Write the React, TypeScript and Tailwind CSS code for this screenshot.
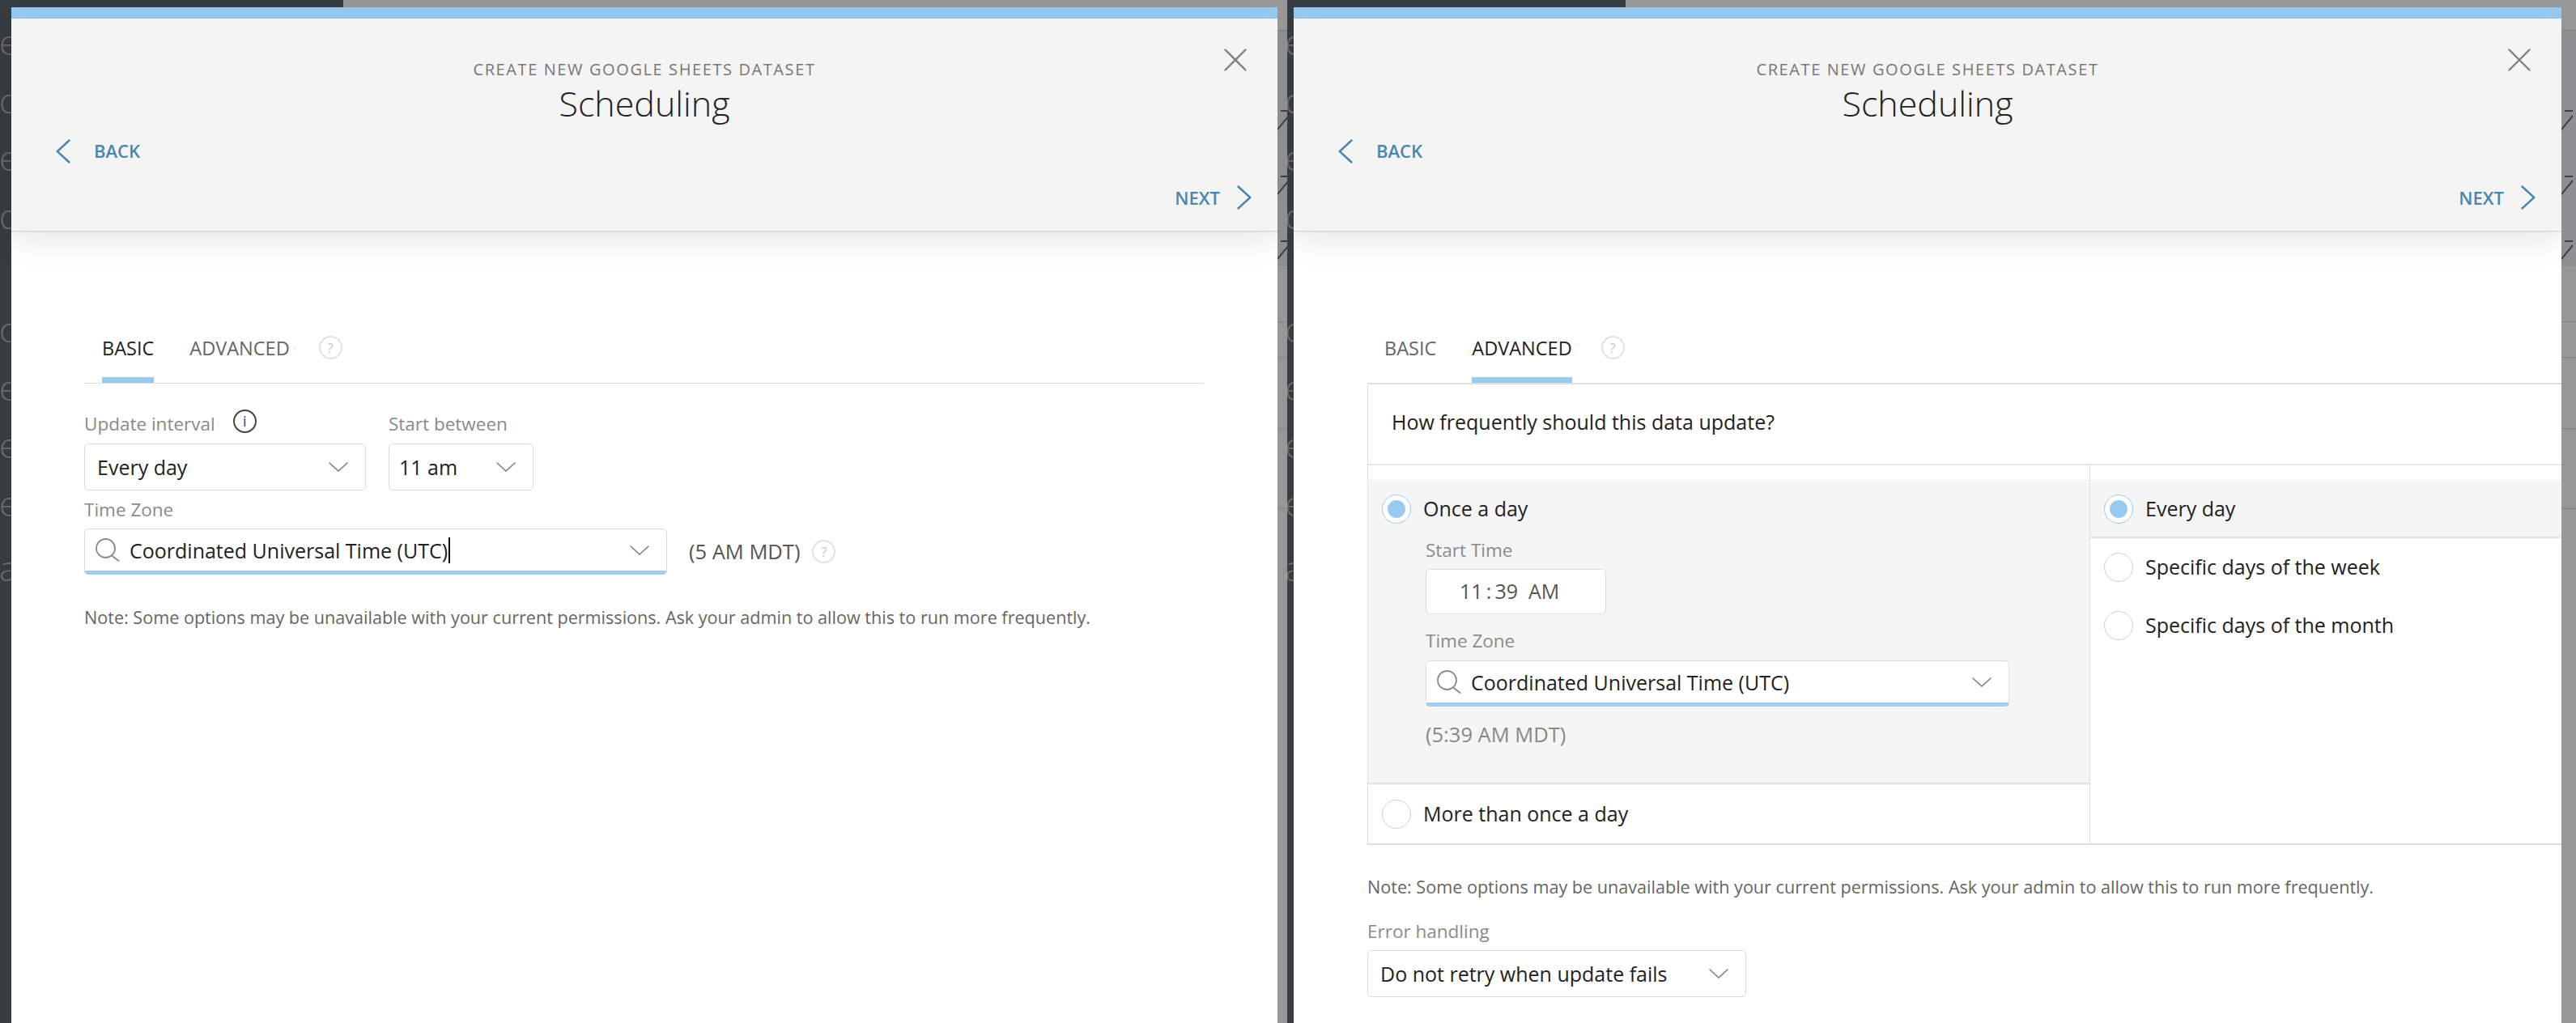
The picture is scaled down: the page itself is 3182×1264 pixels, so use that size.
import React from "react";

const Chevron = ({ dir, className }: { dir: "left" | "right"; className?: string }) => (
  <svg viewBox="0 0 18 30" className={className} fill="none" stroke="#4a86b0" strokeWidth="2.4" strokeLinecap="round" strokeLinejoin="round">
    {dir === "left" ? <path d="M16.5 1.5 L1.8 15 L16.5 28.5" /> : <path d="M1.5 1.5 L16.2 15 L1.5 28.5" />}
  </svg>
);

const Caret = () => (
  <svg viewBox="0 0 24 12" className="w-[24px] h-[12px] shrink-0" fill="none" stroke="#7c7c7c" strokeWidth="1.5" strokeLinecap="round">
    <path d="M1 1 L12 11 L23 1" />
  </svg>
);

const Search = () => (
  <svg viewBox="0 0 31 29" className="w-[31px] h-[29px] shrink-0" fill="none" stroke="#8a8a8a" strokeWidth="1.8" strokeLinecap="round">
    <circle cx="13.5" cy="12.5" r="11.5" />
    <path d="M21 21.5 L29.5 28" />
  </svg>
);

const CloseIcon = () => (
  <svg viewBox="0 0 28 28" className="w-[28px] h-[28px]" fill="none" stroke="#808080" strokeWidth="2.4" strokeLinecap="round">
    <path d="M1.5 1.5 L26.5 26.5 M26.5 1.5 L1.5 26.5" />
  </svg>
);

const Help = ({ className }: { className?: string }) => (
  <span className={`flex items-center justify-center w-[29px] h-[29px] rounded-full border-2 border-[#e2e2e2] text-[17px] leading-none text-[#c8c8c8] ${className ?? ""}`}>?</span>
);

const Info = () => (
  <span className="flex items-center justify-center w-[29px] h-[29px] rounded-full border-2 border-[#444] text-[18px] leading-none text-[#444]">i</span>
);

const Radio = ({ on }: { on?: boolean }) => (
  <span className={`flex items-center justify-center w-[36px] h-[36px] rounded-full border bg-white shrink-0 ${on ? "border-[#98caf0]" : "border-[#cfcfcf]"}`}>
    {on && <span className="w-[22px] h-[22px] rounded-full bg-[#98caf0]" />}
  </span>
);

const Select = ({ label, width, pl = "pl-[15px]" }: { label: string; width: string; pl?: string }) => (
  <div className={`flex items-center justify-between h-[58px] rounded-[5px] border border-[#dcdcdc] bg-white pr-[21px] text-[25px] text-[#222] ${width} ${pl}`}>
    <span className="mt-[2px]">{label}</span>
    <Caret />
  </div>
);

const TimeZoneInput = ({ width, caret }: { width: string; caret?: boolean }) => (
  <div className={`flex items-center h-[57px] rounded-[5px] border border-[#dcdcdc] border-b-[5px] border-b-[#a3cdec] bg-white pl-[12px] pr-[21px] ${width}`}>
    <Search />
    <span className="ml-[12px] mt-[2px] text-[25px] text-[#222] whitespace-nowrap">Coordinated Universal Time (UTC)</span>
    {caret && <span className="w-[2px] h-[32px] bg-black ml-[1px]" />}
    <span className="flex-1" />
    <Caret />
  </div>
);

const Label = ({ children }: { children: React.ReactNode }) => (
  <div className="text-[22.5px] leading-[30px] text-[#8a8a8a]">{children}</div>
);

const Note = () => (
  <div className="text-[21.6px] leading-[30px] text-[#666] whitespace-nowrap">
    Note: Some options may be unavailable with your current permissions. Ask your admin to allow this to run more frequently.
  </div>
);

const Header = () => (
  <div className="relative h-[264px] shrink-0 bg-[#f4f4f4] border-b-2 border-[#dedede] shadow-[0_10px_36px_rgba(0,0,0,0.10)] pt-[49px]">
    <div className="text-center text-[20px] leading-[28px] tracking-[1.6px] text-[#777]">CREATE NEW GOOGLE SHEETS DATASET</div>
    <div className="text-center text-[43px] leading-[56px] font-light text-[#222]">Scheduling</div>
    <div className="flex items-center h-[30px] mt-[16px] pl-[55px]">
      <Chevron dir="left" className="w-[18px] h-[30px]" />
      <span className="ml-[29px] -mt-[2px] text-[22px] font-semibold text-[#4a86b0]">BACK</span>
    </div>
    <div className="flex items-center justify-end h-[30px] mt-[27px] pr-[32px]">
      <span className="mr-[21px] text-[22px] font-semibold text-[#4a86b0]">NEXT</span>
      <Chevron dir="right" className="w-[18px] h-[30px]" />
    </div>
    <button className="absolute right-[38px] top-[37px]"><CloseIcon /></button>
  </div>
);

const Tabs = ({ active, pl }: { active: "BASIC" | "ADVANCED"; pl: string }) => (
  <div className={`flex items-start h-[66px] text-[23.5px] leading-[30px] ${pl}`}>
    <div className={`h-[66px] pt-[8px] border-b-[7px] ${active === "BASIC" ? "border-[#98caf0] text-[#222] font-medium" : "border-transparent text-[#666]"}`}>BASIC</div>
    <div className={`ml-[44px] h-[66px] pt-[8px] border-b-[7px] ${active === "ADVANCED" ? "border-[#98caf0] text-[#222] font-medium" : "border-transparent text-[#666]"}`}>ADVANCED</div>
    <Help className="ml-[36px] mt-[8px]" />
  </div>
);

const Letters = ({ left }: { left: string }) => (
  <>
    {[
      ["e", "top-[22px]"],
      ["d", "top-[94px]"],
      ["e", "top-[165px]"],
      ["d", "top-[237px]"],
      ["o", "top-[377px]"],
      ["e", "top-[449px]"],
      ["e", "top-[520px]"],
      ["e", "top-[592px]"],
      ["a", "top-[672px]"],
    ].map(([t, y], i) => (
      <span key={i} className={`absolute text-[42px] leading-none font-light text-white/25 ${left} ${y}`}>{t}</span>
    ))}
  </>
);

const GrayBack = ({ slashX }: { slashX: string }) => (
  <>
    <div className="absolute inset-x-0 top-[28px] h-[292px] bg-[#8b8f92] border-t border-[#7d7d7d]" />
    <div className="absolute inset-x-0 top-[388px] h-px bg-[#808080]" />
    <div className="absolute inset-x-0 top-[432px] h-px bg-[#808080]" />
    <div className="absolute inset-x-0 top-[520px] h-px bg-[#808080]" />
    <div className="absolute inset-x-0 top-[619px] h-px bg-[#808080]" />
    <svg className={`absolute top-0 w-[14px] h-[330px] ${slashX}`} viewBox="0 0 14 330" fill="none" stroke="#3c4045" strokeWidth="2">
      <path d="M0 151 L14 134 M4 128 H14 M0 231 L14 214 M4 209 H14 M0 311 L14 294 M4 289 H14" />
    </svg>
  </>
);

const RowItem = ({ on, label }: { on?: boolean; label: string }) => (
  <div className="flex items-center gap-[15px] pl-[17px] h-[36px] text-[25px] text-[#222]">
    <Radio on={on} />
    <span>{label}</span>
  </div>
);

export default function App() {
  return (
    <div className="flex flex-col w-[3182px] h-[1264px] overflow-hidden bg-[#979797] font-['Open_Sans',sans-serif]">
      <div className="flex h-[9px] shrink-0">
        <div className="w-[424px] bg-[#373c42]" />
        <div className="w-[1166px] bg-[#979797]" />
        <div className="w-[418px] bg-[#373c42]" />
        <div className="flex-1 bg-[#979797]" />
      </div>
      <div className="flex flex-1 min-h-0">
        <div className="relative w-[14px] shrink-0 overflow-hidden bg-[#373c42]">
          <Letters left="-left-[1px]" />
        </div>
        {/* Basic */}
        <div className="flex flex-col w-[1564px] bg-white shrink-0">
          <div className="h-[14px] shrink-0 bg-[#98caf0]" />
          <Header />
          <div className="pt-[120px] pl-[90px] pr-[91px]">
            <div className="border-b border-[#dedede]">
              <Tabs active="BASIC" pl="pl-[22px]" />
            </div>
            <div className="flex gap-[28px] mt-[38px]">
              <div>
                <div className="flex items-center h-[36px] pb-[12px] gap-[22px]">
                  <Label>Update interval</Label>
                  <span className="-mt-[8px]"><Info /></span>
                </div>
                <Select label="Every day" width="w-[348px]" />
              </div>
              <div>
                <div className="h-[36px] pb-[12px] flex items-center"><Label>Start between</Label></div>
                <Select label="11 am" width="w-[179px]" pl="pl-[12px]" />
              </div>
            </div>
            <div className="mt-[9px]"><Label>Time Zone</Label></div>
            <div className="flex items-center mt-[8px]">
              <TimeZoneInput width="w-[720px]" caret />
              <span className="ml-[27px] text-[25.5px] text-[#555]">(5 AM MDT)</span>
              <Help className="ml-[15px]" />
            </div>
            <div className="mt-[38px]"><Note /></div>
          </div>
        </div>
        <div className="relative flex w-[20px] shrink-0 overflow-hidden">
          <div className="relative w-[12px] bg-[#979797]">
            <GrayBack slashX="left-0" />
          </div>
          <div className="w-[8px] bg-[#373c42]" />
          <Letters left="left-[9px]" />
        </div>
        {/* Advanced */}
        <div className="flex flex-col w-[1566px] bg-white shrink-0 overflow-hidden">
          <div className="h-[14px] shrink-0 bg-[#98caf0]" />
          <Header />
          <div className="pt-[120px] pl-[91px]">
            <Tabs active="ADVANCED" pl="pl-[21px]" />
            <div className="border-t-2 border-l border-b-2 border-[#dedede]">
              <div className="flex items-center h-[100px] pb-[4px] pl-[29px] text-[25px] text-[#222] border-b-2 border-[#e8e8e8]">How frequently should this data update?</div>
              <div className="flex">
                <div className="w-[892px] border-r border-[#dedede] pt-[18px]">
                  <div className="bg-[#f5f5f5] h-[376px] pt-[18px] border-b-2 border-[#e0e0e0]">
                    <RowItem on label="Once a day" />
                    <div className="pl-[71px] pt-[18px]">
                      <Label>Start Time</Label>
                      <div className="flex items-center w-[223px] h-[56px] mt-[8px] pl-[41px] rounded-[5px] border border-[#dcdcdc] bg-white text-[25px] text-[#555] whitespace-pre">{"11\u2009:\u200939  AM"}</div>
                      <div className="mt-[18px]"><Label>Time Zone</Label></div>
                      <div className="mt-[9px]"><TimeZoneInput width="w-[721px]" /></div>
                      <div className="mt-[17px] text-[25.5px] leading-[34px] text-[#888]">(5:39 AM MDT)</div>
                    </div>
                  </div>
                  <div className="flex items-center h-[73px]">
                    <RowItem label="More than once a day" />
                  </div>
                </div>
                <div className="flex-1 pt-[18px]">
                  <div className="flex items-center h-[72px] pt-[2px] bg-[#f5f5f5] border-b-2 border-[#e0e0e0]">
                    <RowItem on label="Every day" />
                  </div>
                  <div className="mt-[18px] flex flex-col gap-[36px]">
                    <RowItem label="Specific days of the week" />
                    <RowItem label="Specific days of the month" />
                  </div>
                </div>
              </div>
            </div>
            <div className="mt-[37px]"><Note /></div>
            <div className="mt-[25px]"><Label>Error handling</Label></div>
            <div className="mt-[8px]"><Select label="Do not retry when update fails" width="w-[468px]" /></div>
          </div>
        </div>
        <div className="relative flex-1 overflow-hidden bg-[#979797]">
          <GrayBack slashX="left-0" />
        </div>
      </div>
    </div>
  );
}
